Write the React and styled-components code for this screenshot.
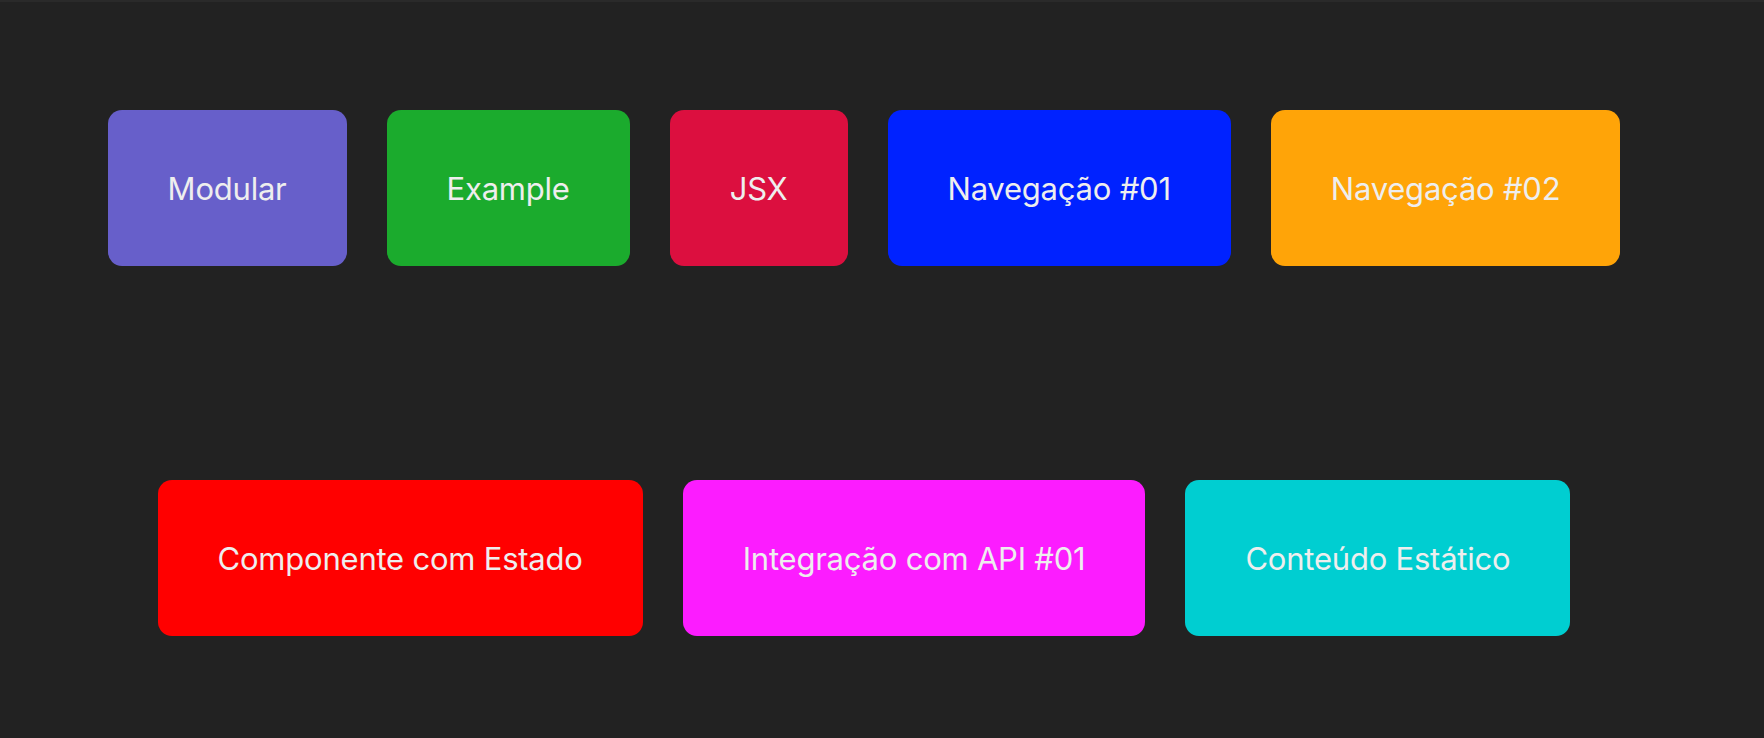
import React from 'react';
import styled, { createGlobalStyle } from 'styled-components';

const GlobalStyle = createGlobalStyle`
  html, body {
    margin: 0;
    padding: 0;
    background: #222222;
  }

  body {
    font-family: Inter, "Noto Sans", sans-serif;
    border-top: 2px solid #2a2a2a;
    min-height: 736px;
  }
`;

export const Page = styled.main`
  display: flex;
  flex-direction: column;
  gap: 214px;
  width: 1728px;
  padding-top: 108px;
`;

export const Row = styled.nav`
  display: flex;
  justify-content: center;
  gap: 40px;
`;

export const NavButton = styled.a`
  display: flex;
  align-items: center;
  justify-content: center;
  height: 156px;
  padding: 0 60px;
  border-radius: 14px;
  background: ${props => props.color};
  color: #eeeeee;
  font-size: 31px;
  font-weight: 400;
  letter-spacing: -0.22px;
  text-decoration: none;
  white-space: nowrap;
  cursor: pointer;
`;

const rows = [
  [
    { label: 'Modular', color: '#675fca' },
    { label: 'Example', color: '#1bab2d' },
    { label: 'JSX', color: '#dc0f3f' },
    { label: 'Navegação #01', color: '#0022ff' },
    { label: 'Navegação #02', color: '#ffa408' },
  ],
  [
    { label: 'Componente com Estado', color: '#ff0000' },
    { label: 'Integração com API #01', color: '#fc1cff' },
    { label: 'Conteúdo Estático', color: '#00ced1' },
  ],
];

const App = () => (
  <>
    <GlobalStyle />
    <Page>
      {rows.map((row, i) => (
        <Row key={i}>
          {row.map(item => (
            <NavButton key={item.label} color={item.color}>
              {item.label}
            </NavButton>
          ))}
        </Row>
      ))}
    </Page>
  </>
);

export default App;
